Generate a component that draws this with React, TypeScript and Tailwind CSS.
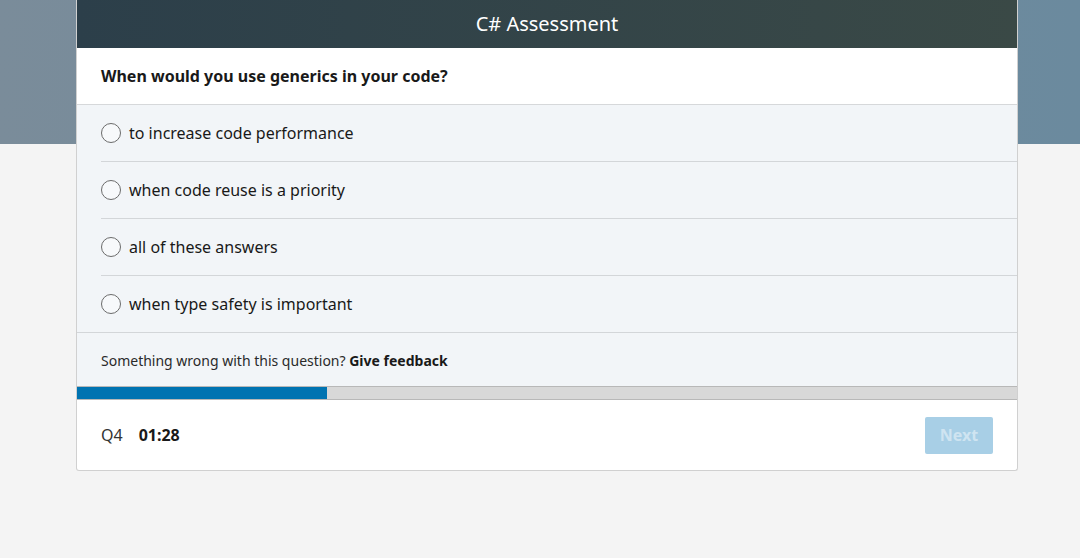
const options = [
  "to increase code performance",
  "when code reuse is a priority",
  "all of these answers",
  "when type safety is important",
];

function Radio() {
  return (
    <span className="inline-block h-5 w-5 shrink-0 rounded-full border-[1.5px] border-[#6b6b6b] bg-[#f7f9fb]" />
  );
}

export default function App() {
  const progress = 26.6;
  return (
    <div
      className="relative h-[558px] w-full overflow-hidden bg-[#f4f4f4] text-[#191919]"
      style={{ fontFamily: '"Segoe UI", "Noto Sans", "Open Sans", sans-serif' }}
    >
      <div className="h-[144px] w-full bg-gradient-to-r from-[#7a8c9a] to-[#6b8a9e]" />
      <div className="absolute left-[76px] top-0 w-[942px] overflow-hidden rounded-b-[3px] border-x border-b border-[#d0d0d0] bg-white">
        <div className="flex h-12 items-center justify-center bg-gradient-to-r from-[#2c3f4a] to-[#3a4946] text-[20px] text-white">
          C# Assessment
        </div>
        <div className="flex h-[57px] items-center border-b border-[#d6d8da] px-6 text-[16px] font-bold">
          When would you use generics in your code?
        </div>
        <div className="bg-[#f2f5f8]">
          {options.map((o, i) => (
            <div key={o} className="pl-6">
              <div
                className={`flex items-center gap-2 ${i < options.length - 1 ? "h-[57px] border-b border-[#d3d6d9]" : "h-[56px]"}`}
              >
                <Radio />
                <span className="text-[16px] leading-none">{o}</span>
              </div>
            </div>
          ))}
          <div className="flex h-[54px] items-center border-t border-[#d3d6d9] px-6 pt-[2px] text-[14px]">
            <span className="text-[#2a2a2a]">Something wrong with this question?&nbsp;</span>
            <span className="font-bold">Give feedback</span>
          </div>
        </div>
        <div className="h-[14px] border-y border-[#b8b8b8] bg-[#d8d8d8]">
          <div className="h-full bg-[#0073b1]" style={{ width: `${progress}%` }} />
        </div>
        <div className="flex h-[70px] items-center justify-between px-6">
          <div className="flex items-center gap-4 text-[16px]">
            <span className="text-[#333]">Q4</span>
            <span className="font-bold">01:28</span>
          </div>
          <button className="h-[37px] w-[68px] rounded-[2px] bg-[#a8cfe6] text-[16px] font-bold text-[#cfe4f1]">
            Next
          </button>
        </div>
      </div>
    </div>
  );
}
